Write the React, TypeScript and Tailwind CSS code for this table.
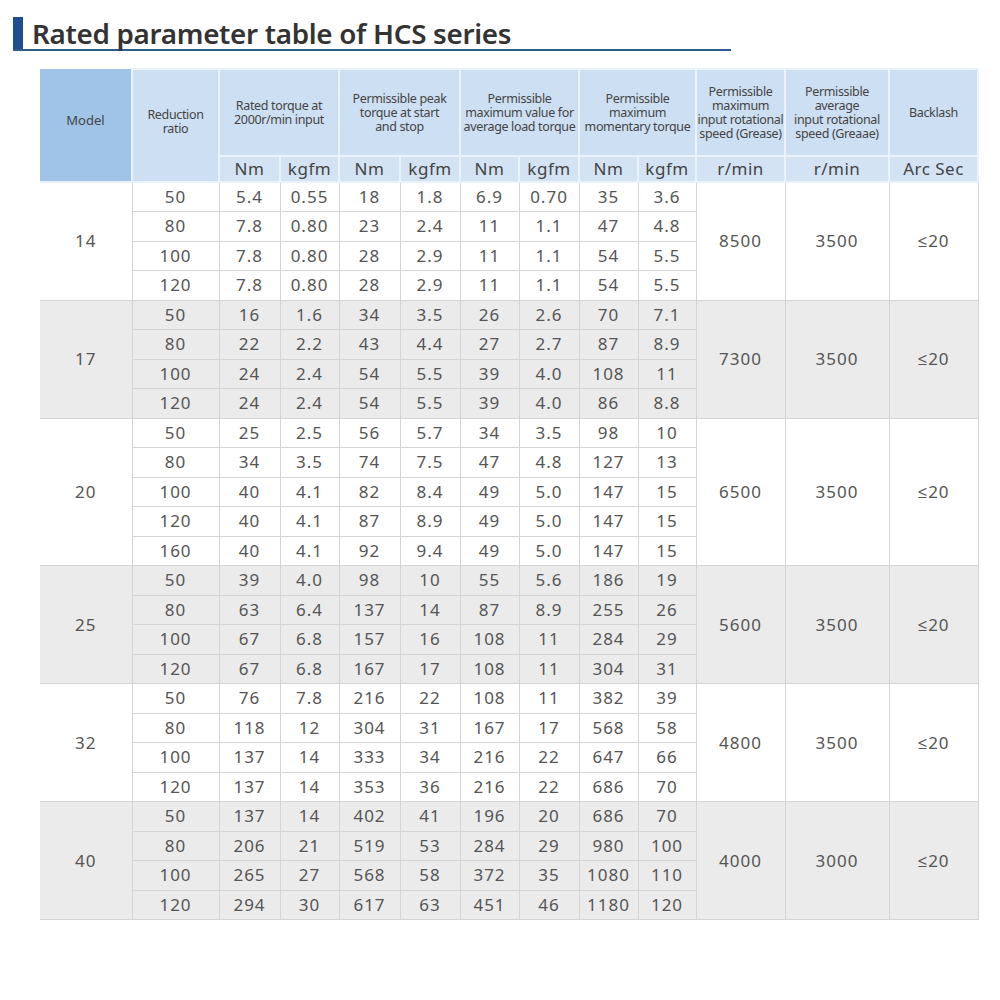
type Row = string[];

interface Group {
  model: string;
  rows: Row[];
  maxSpeed: string;
  avgSpeed: string;
  backlash: string;
}

const groups: Group[] = [
  {
    model: '14',
    rows: [
      ['50', '5.4', '0.55', '18', '1.8', '6.9', '0.70', '35', '3.6'],
      ['80', '7.8', '0.80', '23', '2.4', '11', '1.1', '47', '4.8'],
      ['100', '7.8', '0.80', '28', '2.9', '11', '1.1', '54', '5.5'],
      ['120', '7.8', '0.80', '28', '2.9', '11', '1.1', '54', '5.5'],
    ],
    maxSpeed: '8500',
    avgSpeed: '3500',
    backlash: '≤20',
  },
  {
    model: '17',
    rows: [
      ['50', '16', '1.6', '34', '3.5', '26', '2.6', '70', '7.1'],
      ['80', '22', '2.2', '43', '4.4', '27', '2.7', '87', '8.9'],
      ['100', '24', '2.4', '54', '5.5', '39', '4.0', '108', '11'],
      ['120', '24', '2.4', '54', '5.5', '39', '4.0', '86', '8.8'],
    ],
    maxSpeed: '7300',
    avgSpeed: '3500',
    backlash: '≤20',
  },
  {
    model: '20',
    rows: [
      ['50', '25', '2.5', '56', '5.7', '34', '3.5', '98', '10'],
      ['80', '34', '3.5', '74', '7.5', '47', '4.8', '127', '13'],
      ['100', '40', '4.1', '82', '8.4', '49', '5.0', '147', '15'],
      ['120', '40', '4.1', '87', '8.9', '49', '5.0', '147', '15'],
      ['160', '40', '4.1', '92', '9.4', '49', '5.0', '147', '15'],
    ],
    maxSpeed: '6500',
    avgSpeed: '3500',
    backlash: '≤20',
  },
  {
    model: '25',
    rows: [
      ['50', '39', '4.0', '98', '10', '55', '5.6', '186', '19'],
      ['80', '63', '6.4', '137', '14', '87', '8.9', '255', '26'],
      ['100', '67', '6.8', '157', '16', '108', '11', '284', '29'],
      ['120', '67', '6.8', '167', '17', '108', '11', '304', '31'],
    ],
    maxSpeed: '5600',
    avgSpeed: '3500',
    backlash: '≤20',
  },
  {
    model: '32',
    rows: [
      ['50', '76', '7.8', '216', '22', '108', '11', '382', '39'],
      ['80', '118', '12', '304', '31', '167', '17', '568', '58'],
      ['100', '137', '14', '333', '34', '216', '22', '647', '66'],
      ['120', '137', '14', '353', '36', '216', '22', '686', '70'],
    ],
    maxSpeed: '4800',
    avgSpeed: '3500',
    backlash: '≤20',
  },
  {
    model: '40',
    rows: [
      ['50', '137', '14', '402', '41', '196', '20', '686', '70'],
      ['80', '206', '21', '519', '53', '284', '29', '980', '100'],
      ['100', '265', '27', '568', '58', '372', '35', '1080', '110'],
      ['120', '294', '30', '617', '63', '451', '46', '1180', '120'],
    ],
    maxSpeed: '4000',
    avgSpeed: '3000',
    backlash: '≤20',
  },
];

const colWidths = [92, 87, 61, 59, 61, 60, 59, 60, 59, 58, 89, 104, 89];

function App() {
  const head =
    'bg-[#cddff2] border-2 border-[#eaf2fb] px-0 text-[12.5px] leading-[14px] tracking-[-0.35px] whitespace-nowrap text-[#444] font-normal align-middle';
  const unit =
    'bg-[#d3e3f4] border-2 border-[#eaf2fb] px-0 text-[17px] leading-[20px] text-[#444] font-normal tracking-[0.5px] whitespace-nowrap';
  const cell = 'border border-[#d4d4d4] text-center align-middle';

  return (
    <div className="min-h-[1000px] bg-white pt-[17px]" style={{ fontFamily: '"Noto Sans", "Open Sans", sans-serif' }}>
      {/* Title */}
      <div className="ml-[13px] w-[718px] border-b-2 border-[#2d5b8e] flex items-center">
        <div className="w-[10px] h-[32px] bg-[#1f4f8e]"></div>
        <h1 className="ml-[9px] text-[27.8px] leading-[32px] font-semibold text-[#333] tracking-[-0.3px]">
          Rated parameter table of HCS series
        </h1>
      </div>

      {/* Table */}
      <table className="ml-[40px] mt-[17px] table-fixed border-collapse w-[938px] text-[#555]">
        <colgroup>
          {colWidths.map((w, i) => (
            <col key={i} style={{ width: w }} />
          ))}
        </colgroup>
        <thead>
          <tr className="h-[87px]">
            <th
              rowSpan={2}
              className="bg-[#9fc4e7] border-2 border-[#eaf2fb] border-l-0 border-t-0 text-[13px] text-[#444] font-normal pb-[8px]"
            >
              Model
            </th>
            <th rowSpan={2} className={`${head} pb-[8px]`}>Reduction<br />ratio</th>
            <th colSpan={2} className={head}>Rated torque at<br />2000r/min input</th>
            <th colSpan={2} className={head}>Permissible peak<br />torque at start<br />and stop</th>
            <th colSpan={2} className={head}>Permissible<br />maximum value for<br />average load torque</th>
            <th colSpan={2} className={head}>Permissible<br />maximum<br />momentary torque</th>
            <th className={head}>Permissible<br />maximum<br />input rotational<br />speed (Grease)</th>
            <th className={head}>Permissible<br />average<br />input rotational<br />speed (Greaae)</th>
            <th className={head}>Backlash</th>
          </tr>
          <tr className="h-[26px]">
            <th className={unit}>Nm</th>
            <th className={unit}>kgfm</th>
            <th className={unit}>Nm</th>
            <th className={unit}>kgfm</th>
            <th className={unit}>Nm</th>
            <th className={unit}>kgfm</th>
            <th className={unit}>Nm</th>
            <th className={unit}>kgfm</th>
            <th className={unit}>r/min</th>
            <th className={unit}>r/min</th>
            <th className={unit}>Arc Sec</th>
          </tr>
        </thead>
        <tbody className="text-[17px] leading-[20px] tracking-[1px]">
          {groups.map((g, gi) => {
            const bg = gi % 2 === 1 ? 'bg-[#ebebeb]' : 'bg-white';
            return g.rows.map((r, ri) => (
              <tr key={`${gi}-${ri}`} className={`h-[29.5px] ${bg}`}>
                {ri === 0 && (
                  <td rowSpan={g.rows.length} className={`${cell} border-l-0`}>
                    {g.model}
                  </td>
                )}
                {r.map((v, ci) => (
                  <td key={ci} className={cell}>
                    {v}
                  </td>
                ))}
                {ri === 0 && (
                  <>
                    <td rowSpan={g.rows.length} className={cell}>{g.maxSpeed}</td>
                    <td rowSpan={g.rows.length} className={cell}>{g.avgSpeed}</td>
                    <td rowSpan={g.rows.length} className={cell}>{g.backlash}</td>
                  </>
                )}
              </tr>
            ));
          })}
        </tbody>
      </table>
    </div>
  );
}

export default App;
